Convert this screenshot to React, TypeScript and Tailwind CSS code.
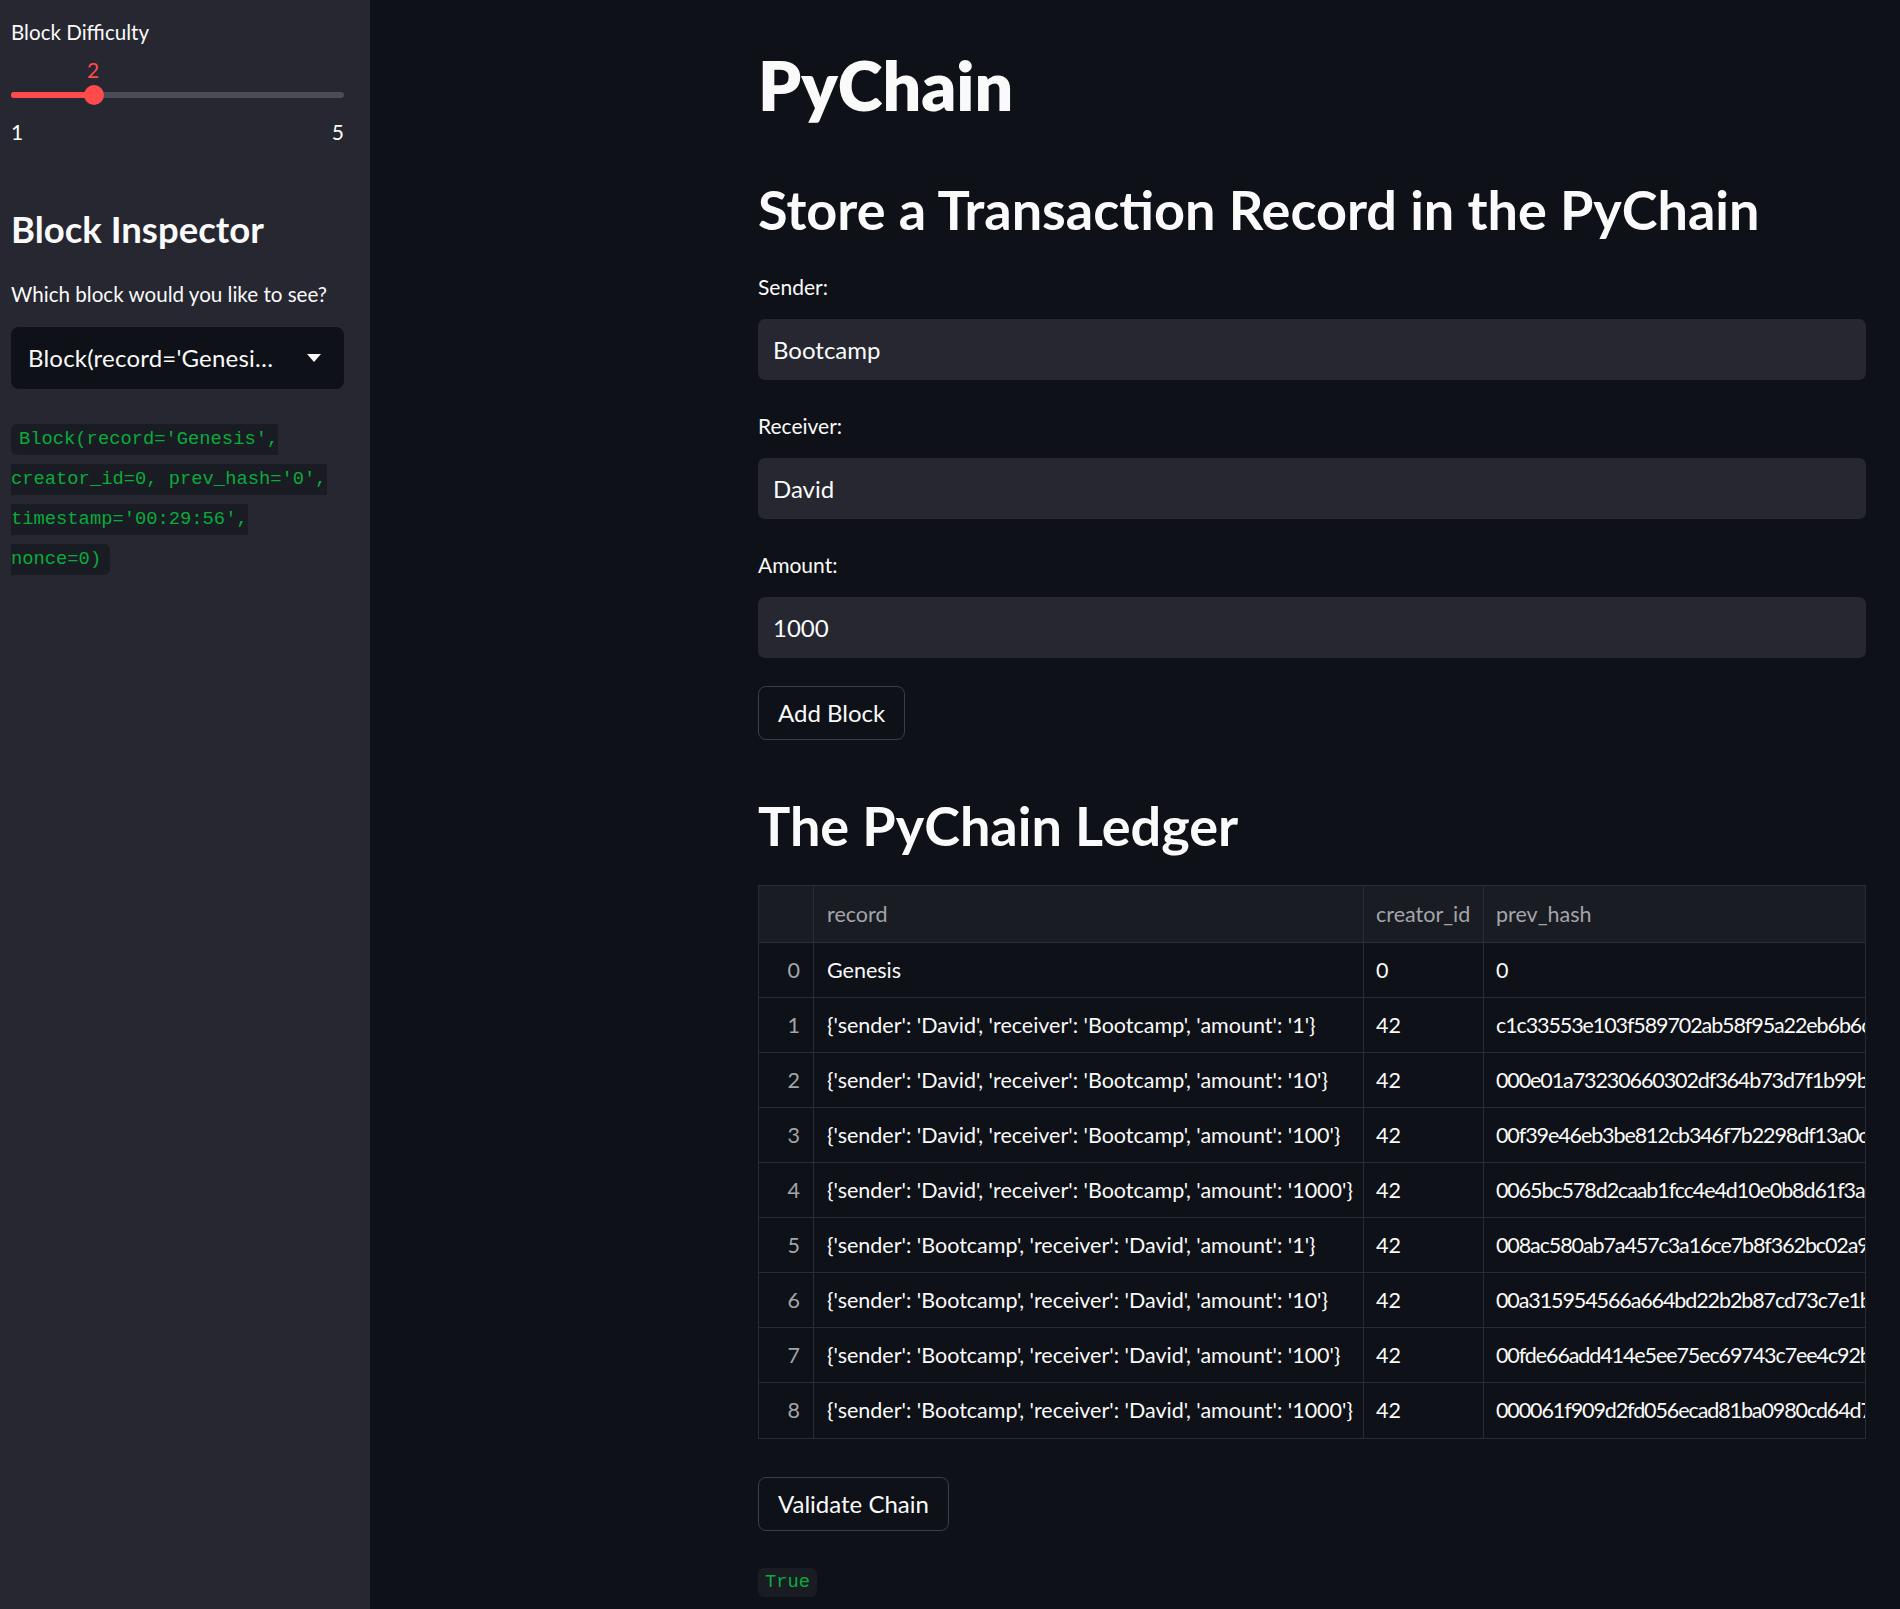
import React from "react";

const SANS = { fontFamily: "Lato, 'Noto Sans', sans-serif" };
const MONO = { fontFamily: "'Liberation Mono', 'DejaVu Sans Mono', monospace" };

const rows: [string, string, string, string][] = [
  ["0", "Genesis", "0", "0"],
  ["1", "{'sender': 'David', 'receiver': 'Bootcamp', 'amount': '1'}", "42", "c1c33553e103f589702ab58f95a22eb6b6c0a4f1e2d9b7c3a5f8e0d1b2c3a4f5"],
  ["2", "{'sender': 'David', 'receiver': 'Bootcamp', 'amount': '10'}", "42", "000e01a73230660302df364b73d7f1b99b4c2e8a1f0d3b5c7e9a2b4d6f8a0c1e"],
  ["3", "{'sender': 'David', 'receiver': 'Bootcamp', 'amount': '100'}", "42", "00f39e46eb3be812cb346f7b2298df13a0c5e7f9a1b3d5e7f9a1c3e5a7b9d1f3"],
  ["4", "{'sender': 'David', 'receiver': 'Bootcamp', 'amount': '1000'}", "42", "0065bc578d2caab1fcc4e4d10e0b8d61f3a2c4e6f8a0b2d4e6f8a1c3e5b7d9f1"],
  ["5", "{'sender': 'Bootcamp', 'receiver': 'David', 'amount': '1'}", "42", "008ac580ab7a457c3a16ce7b8f362bc02a9d1e3f5a7b9c1d3e5f7a9b1c3d5e7f"],
  ["6", "{'sender': 'Bootcamp', 'receiver': 'David', 'amount': '10'}", "42", "00a315954566a664bd22b2b87cd73c7e1b5d7f9a1c3e5b7d9f1a3c5e7b9d1f3a"],
  ["7", "{'sender': 'Bootcamp', 'receiver': 'David', 'amount': '100'}", "42", "00fde66add414e5ee75ec69743c7ee4c92b4d6f8a0c2e4b6d8f0a2c4e6b8d0f2"],
  ["8", "{'sender': 'Bootcamp', 'receiver': 'David', 'amount': '1000'}", "42", "000061f909d2fd056ecad81ba0980cd64d7e9f1a3b5c7d9e1f3a5b7c9d1e3f5a"],
];

function Field({ label, value }: { label: string; value: string }) {
  return (
    <div className="flex flex-col">
      <div className="h-[30px] leading-[30px] text-[21px] text-[#fafafa]">{label}</div>
      <div className="mt-[17px] h-[61px] rounded-[7px] bg-[#262730] flex items-center pl-[15px] text-[24px] text-[#fafafa]">
        {value}
      </div>
    </div>
  );
}

function Btn({ children }: { children: React.ReactNode }) {
  return (
    <div className="inline-flex h-[54px] items-center rounded-[8px] border border-[#3c3e46] px-[19px] text-[24px] text-[#fafafa] self-start">
      {children}
    </div>
  );
}

export default function App() {
  return (
    <div className="flex min-h-[1609px] w-[1900px] bg-[#0e1117] text-[#fafafa]" style={SANS}>
      {/* Sidebar */}
      <aside className="w-[370px] shrink-0 bg-[#262730] pl-[11px] pr-[26px] pt-[17px]">
        <div className="h-[30px] leading-[30px] text-[20.6px]">Block Difficulty</div>
        <div className="relative h-[70px]">
          <div className="absolute left-[76px] top-[10px] h-[25px] leading-[25px] text-[21px] text-[#ff4b4b]">2</div>
          <div className="absolute left-0 right-0 top-[45px] h-[6px] rounded-full bg-[#4a4c56]" />
          <div className="absolute left-0 top-[45px] h-[6px] w-[83px] rounded-full bg-[#ff4b4b]" />
          <div className="absolute left-[73px] top-[38px] h-[20px] w-[20px] rounded-full bg-[#ff4b4b]" />
        </div>
        <div className="flex h-[29px] justify-between leading-[29px] text-[21px]">
          <span>1</span>
          <span>5</span>
        </div>
        <h2 className="mt-[61px] h-[44px] leading-[44px] text-[36.5px] font-bold">Block Inspector</h2>
        <div className="mt-[28px] h-[30px] leading-[30px] text-[20.6px]">Which block would you like to see?</div>
        <div className="mt-[18px] flex h-[62px] items-center justify-between rounded-[8px] bg-[#0e1117] pl-[17px] pr-[23px] text-[24px]">
          <span className="tracking-[0.2px]">Block(record='Genesi…</span>
          <svg width="14" height="8" viewBox="0 0 14 8">
            <path d="M0 0 L14 0 L7 8 Z" fill="#fafafa" />
          </svg>
        </div>
        <div className="mt-[35px] flex flex-col items-start gap-[9px] text-[18.8px] text-[#09ab3b]" style={MONO}>
          <span className="h-[31px] leading-[31px] rounded-l-[6px] bg-[#1a1c24] pl-[8px] whitespace-pre">Block(record='Genesis',</span>
          <span className="h-[31px] leading-[31px] bg-[#1a1c24] whitespace-pre">creator_id=0, prev_hash='0',</span>
          <span className="h-[31px] leading-[31px] bg-[#1a1c24] whitespace-pre">timestamp='00:29:56',</span>
          <span className="h-[31px] leading-[31px] rounded-r-[6px] bg-[#1a1c24] pr-[9px] whitespace-pre">nonce=0)</span>
        </div>
      </aside>

      {/* Main */}
      <main className="ml-[388px] w-[1108px] pt-[45px] flex flex-col">
        <h1 className="h-[79px] leading-[79px] text-[68px] font-extrabold">PyChain</h1>
        <h2 className="mt-[53px] h-[65px] leading-[65px] text-[54px] font-bold">
          Store a Transaction Record in the PyChain
        </h2>
        <div className="mt-[30px] flex flex-col gap-[31px]">
          <Field label="Sender:" value="Bootcamp" />
          <Field label="Receiver:" value="David" />
          <Field label="Amount:" value="1000" />
        </div>
        <div className="mt-[28px] flex">
          <Btn>Add Block</Btn>
        </div>
        <h2 className="mt-[53px] h-[65px] leading-[65px] text-[54px] font-bold">The PyChain Ledger</h2>

        {/* Table */}
        <div className="mt-[27px] w-[1108px] overflow-hidden border border-[#2a2c34] text-[21.5px]">
          <div className="flex h-[57px] bg-[#1a1c23] border-b border-[#2a2c34] text-[#a3a5ab]">
            <div className="w-[55px] shrink-0 border-r border-[#2a2c34]" />
            <div className="w-[550px] shrink-0 border-r border-[#2a2c34] pl-[13px] flex items-center">record</div>
            <div className="w-[120px] shrink-0 border-r border-[#2a2c34] pl-[12px] flex items-center">creator_id</div>
            <div className="flex-1 pl-[12px] flex items-center overflow-hidden whitespace-nowrap">prev_hash</div>
          </div>
          {rows.map((r, i) => (
            <div
              key={r[0]}
              className={`flex h-[55px] ${i < rows.length - 1 ? "border-b border-[#2a2c34]" : ""}`}
            >
              <div className="w-[55px] shrink-0 border-r border-[#2a2c34] pr-[13px] flex items-center justify-end text-[#a3a5ab]">
                {r[0]}
              </div>
              <div className="w-[550px] shrink-0 border-r border-[#2a2c34] pl-[13px] flex items-center whitespace-nowrap overflow-hidden">
                {r[1]}
              </div>
              <div className="w-[120px] shrink-0 border-r border-[#2a2c34] pl-[12px] flex items-center">{r[2]}</div>
              <div className="flex-1 min-w-0 pl-[12px] flex items-center overflow-hidden whitespace-nowrap tracking-[-1.1px]">
                {r[3]}
              </div>
            </div>
          ))}
        </div>

        <div className="mt-[38px] flex">
          <Btn>Validate Chain</Btn>
        </div>
        <div className="mt-[37px] flex">
          <span
            className="h-[29px] leading-[29px] rounded-[6px] bg-[#1a1c24] px-[7px] text-[18.8px] text-[#09ab3b]"
            style={MONO}
          >
            True
          </span>
        </div>
      </main>
    </div>
  );
}
